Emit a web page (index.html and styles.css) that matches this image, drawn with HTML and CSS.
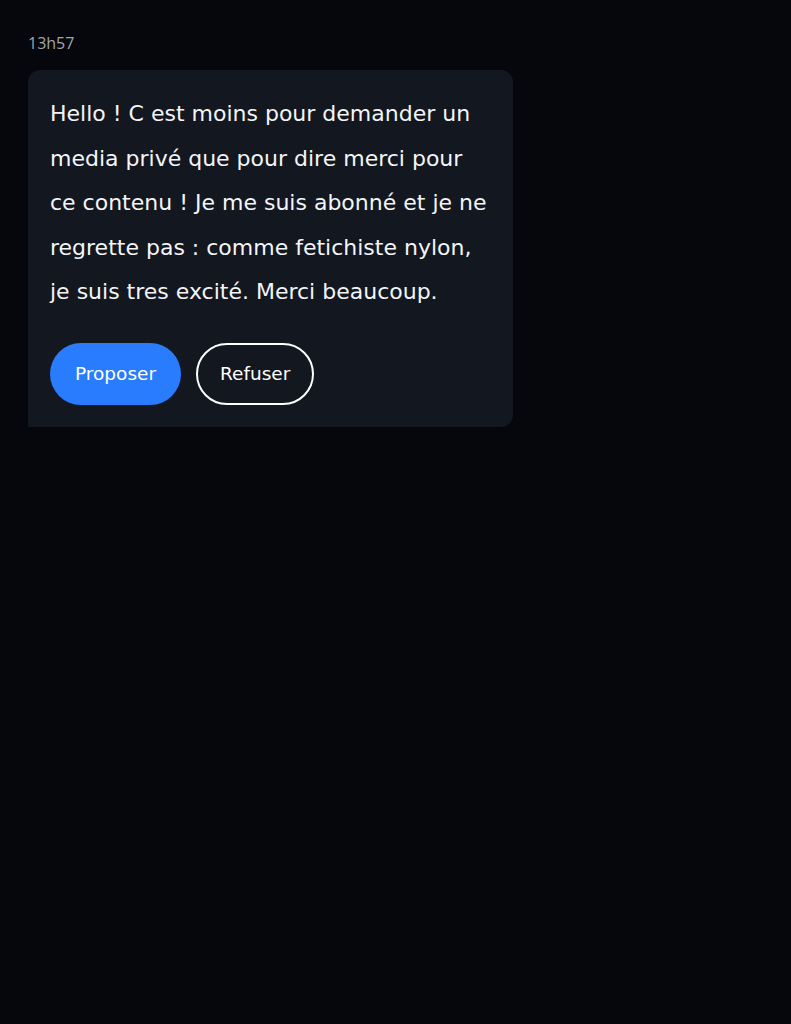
FILE: index.html
```html
<!DOCTYPE html>
<html lang="fr">
<head>
    <meta charset="UTF-8" />
    <meta name="viewport" content="width=device-width, initial-scale=1.0">
    <title>Message</title>
    <link rel="stylesheet" href="styles.css">
</head>
<body>
    <div class="chat">
        <div class="time">13h57</div>
        <div class="bubble">
            <p class="message">Hello ! C est moins pour demander un media privé que pour dire merci pour ce contenu ! Je me suis abonné et je ne regrette pas : comme fetichiste nylon, je suis tres excité. Merci beaucoup.</p>
            <div class="actions">
                <button class="btn btn-primary">Proposer</button>
                <button class="btn btn-outline">Refuser</button>
            </div>
        </div>
    </div>
</body>
</html>
```

FILE: styles.css
```css
body {
    margin: 0;
    padding: 0;
    background-color: #05070c;
    font-family: "DejaVu Sans", "Liberation Sans", sans-serif;
    color: #fff;
}

.chat {
    padding: 32px 28px;
}

.time {
    font-family: "Open Sans", sans-serif;
    font-size: 16px;
    line-height: 22px;
    color: #a3a5a9;
    margin-bottom: 16px;
}

/* bulle du message, coin bas gauche carré */
.bubble {
    width: 441px;
    padding: 22px;
    background-color: #131720;
    border-radius: 12px 12px 12px 0;
}

.message {
    margin: 0;
    font-size: 22px;
    line-height: 44.5px;
    color: #f4f5f7;
}

.actions {
    display: flex;
    gap: 15px;
    margin-top: 28px;
}

.btn {
    height: 62px;
    border-radius: 31px;
    font-family: inherit;
    font-size: 18.5px;
    color: #fff;
    cursor: pointer;
}

.btn-primary {
    padding: 0 25px;
    background-color: #2a7cff;
    border: none;
}

.btn-outline {
    padding: 0 22px;
    background-color: transparent;
    border: 2px solid #fff;
}
```
